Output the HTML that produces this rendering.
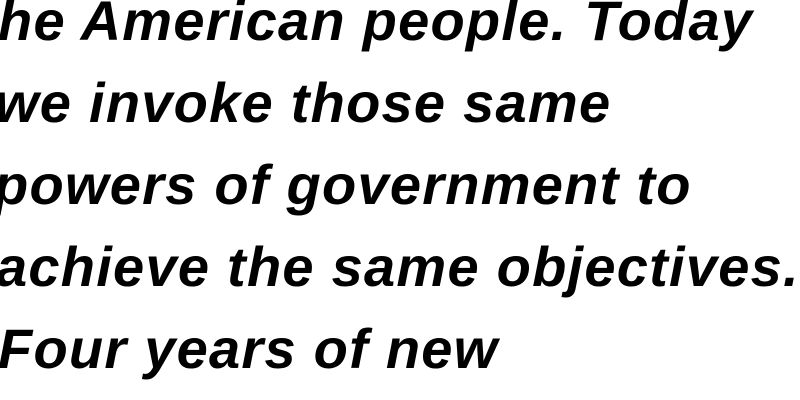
<!DOCTYPE html>
<html><head><meta charset="utf-8"><style>
html,body{margin:0;padding:0;background:#fff;width:800px;height:400px;overflow:hidden;position:relative}
.l{position:absolute;white-space:nowrap;font-family:"Liberation Sans",sans-serif;font-weight:bold;font-style:italic;font-size:56px;line-height:82px;color:#000;letter-spacing:1.25px}
</style></head><body>
<div class="l" style="top:-20px;left:-2px">he American people. Today</div>
<div class="l" style="top:62px;left:-5px">we invoke those same</div>
<div class="l" style="top:144px;left:-6px">powers of government to</div>
<div class="l" style="top:226px;left:-4px">achieve the same objectives.</div>
<div class="l" style="top:308px;left:-2px">Four years of new</div>
</body></html>
